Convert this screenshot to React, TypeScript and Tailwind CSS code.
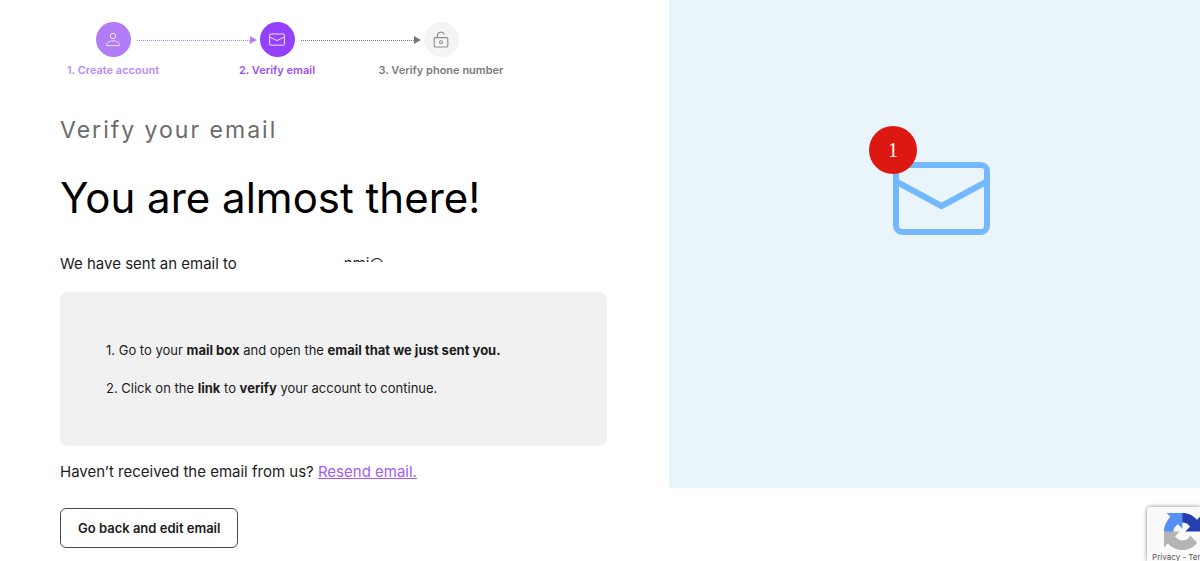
import React from "react";

function PersonIcon() {
  return (
    <svg viewBox="0 0 16 16" className="size-4" fill="none" stroke="currentColor" strokeWidth="1" aria-hidden="true">
      <circle cx="8" cy="4" r="2.7" />
      <path d="M1.6 13.6v-.7c0-2.2 2.4-4 6.4-4s6.400 1.800 6.400 4v.7z" strokeLinejoin="round" />
    </svg>
  );
}

function MailIcon() {
  return (
    <svg viewBox="0 0 16 16" className="size-4" fill="none" stroke="currentColor" strokeWidth="1" aria-hidden="true">
      <rect x=".6" y="2" width="14.8" height="11.200" rx="1" />
      <path d="M.8 5 8 8.600l7.200-3.600" />
    </svg>
  );
}

function UnlockIcon() {
  return (
    <svg viewBox="0 0 16 18" className="h-[18px] w-4" fill="none" stroke="currentColor" strokeWidth="1.1" aria-hidden="true">
      <rect x="1.2" y="6.6" width="13.6" height="9.4" rx="1" />
      <path d="M4.400 6.600V4.800A3.600 3.600 0 0 1 11.400 3.600" />
      <circle cx="8" cy="11.3" r="1.500" />
    </svg>
  );
}

function Connector({ className }: { className: string }) {
  return (
    <div className={"flex items-center pt-[14px] " + className} aria-hidden="true">
      <span className="grow border-t border-dotted border-current" />
      <svg viewBox="0 0 7 8" className="h-2 w-[7px]" fill="currentColor">
        <path d="M0 0l7 4-7 4z" />
      </svg>
    </div>
  );
}

function Step({ label, circle, text, children }: { label: string; circle: string; text: string; children: React.ReactNode }) {
  return (
    <li className="flex w-9 flex-col items-center gap-[3px]">
      <span className={"flex size-[35px] shrink-0 items-center justify-center rounded-full " + circle}>{children}</span>
      <span className={"whitespace-nowrap text-[11px] leading-5 font-semibold " + text}>{label}</span>
    </li>
  );
}

function Steps() {
  return (
    <ol className="flex items-start pl-[35px]">
      <Step label="1. Create account" circle="bg-[#b07df6] text-[#f0e4ff]" text="text-[#bb8df5]">
        <PersonIcon />
      </Step>
      <li className="w-32 pr-0.5 pl-1.5"><Connector className="text-[#b383f4]" /></li>
      <Step label="2. Verify email" circle="bg-[#9440ff] text-[#f0e4ff]" text="text-[#9c4dfa]">
        <MailIcon />
      </Step>
      <li className="w-32 pr-0.5 pl-1.5"><Connector className="text-[#777777]" /></li>
      <Step label="3. Verify phone number" circle="bg-[#f4f4f4] text-[#8d8d8d]" text="text-[#7b7b7b]">
        <UnlockIcon />
      </Step>
    </ol>
  );
}

function Inbox() {
  return (
    <section aria-label="Inbox" className="flex h-[488px] justify-center bg-[#e9f4fb] pt-[162px]">
      <div className="relative ml-[14px] h-[73px] w-[97px]">
        <svg viewBox="0 0 97 73" className="h-full w-full" fill="none" stroke="#74b9ff" strokeWidth="6" aria-hidden="true">
          <rect x="3" y="3" width="91" height="67" rx="6" />
          <path d="M4 20l44.500 24L93 20" />
        </svg>
        <span className="absolute -top-9 -left-6 flex size-12 items-center justify-center rounded-full bg-[#dd1812] font-['Liberation_Serif',serif] text-xl text-white">1</span>
      </div>
    </section>
  );
}

function Recaptcha() {
  return (
    <aside className="absolute right-0 bottom-0 h-[54px] w-[53px] overflow-hidden rounded-tl-sm bg-[#fafafa] shadow-[0_0_4px_#808080]">
      <div className="flex w-[70px] flex-col items-center pt-[6px]">
        <svg viewBox="0 0 64 64" className="size-[37px]" aria-hidden="true">
          <path fill="#263fb0" d="M64 31.955l-.033-1.37V4.687l-7.16 7.16C50.948 4.674 42.033.093 32.05.093c-10.4 0-19.622 4.96-25.458 12.64l11.736 11.86a15.55 15.55 0 0 1 4.754-5.334c2.05-1.6 4.952-2.906 8.968-2.906.485 0 .86.057 1.135.163 4.976.393 9.288 3.14 11.828 7.124l-8.307 8.307L64 31.953" />
          <path fill="#5490f5" d="M31.862.094l-1.37.033H4.594l7.16 7.16C4.58 13.147 0 22.06 0 32.046c0 10.4 4.96 19.622 12.64 25.458L24.5 45.768a15.55 15.55 0 0 1-5.334-4.754c-1.6-2.05-2.906-4.952-2.906-8.968 0-.485.057-.86.163-1.135.393-4.976 3.14-9.288 7.124-11.828l8.307 8.307L31.86.095" />
          <path fill="#b4b4b4" d="M.001 32.045l.033 1.37v25.898l7.16-7.16c5.86 7.173 14.774 11.754 24.76 11.754 10.4 0 19.622-4.96 25.458-12.64l-11.736-11.86a15.55 15.55 0 0 1-4.754 5.334c-2.05 1.6-4.952 2.906-8.968 2.906-.485 0-.86-.057-1.135-.163-4.976-.393-9.288-3.14-11.828-7.124l8.307-8.307c-10.522.04-22.4.066-27.295-.005" />
        </svg>
        <span className="text-[8px] leading-[14px] whitespace-nowrap text-[#555555]">Privacy - Terms</span>
      </div>
    </aside>
  );
}

export default function App() {
  return (
    <div className="relative grid min-h-screen grid-cols-[669fr_531fr] items-start overflow-hidden bg-white font-['Inter',sans-serif] text-[#1c1c1c]">
      <main className="flex flex-col items-start pt-[22px] pr-[62px] pl-[60px]">
        <Steps />
        <h2 className="mt-8 text-[23px] leading-9 tracking-[2px] text-[#6b6b6b]">Verify your email</h2>
        <h1 className="mt-6 text-[42px] leading-[52px] text-black">You are almost there!</h1>
        <p className="mt-7 flex text-[15px] leading-6">
          We have sent an email to
          <span className="mt-1 ml-[107px] h-[6px] overflow-hidden leading-4">nmi@</span>
        </p>
        <ol className="mt-4 flex w-full flex-col gap-[14px] rounded-lg bg-[#f1f1f1] px-[46px] py-[46px] text-[13px] leading-6">
          <li>1. Go to your <b>mail box</b> and open the <b>email that we just sent you.</b></li>
          <li>2. Click on the <b>link</b> to <b>verify</b> your account to continue.</li>
        </ol>
        <p className="mt-[14px] text-[15px] leading-6">
          Haven’t received the email from us? <a href="#resend" className="text-[#a45cf8] underline">Resend email.</a>
        </p>
        <button type="button" className="mt-6 rounded-md border border-[#4a4a4a] px-[17px] py-[7px] text-[13px] leading-6 font-semibold">Go back and edit email</button>
      </main>
      <Inbox />
      <Recaptcha />
    </div>
  );
}
